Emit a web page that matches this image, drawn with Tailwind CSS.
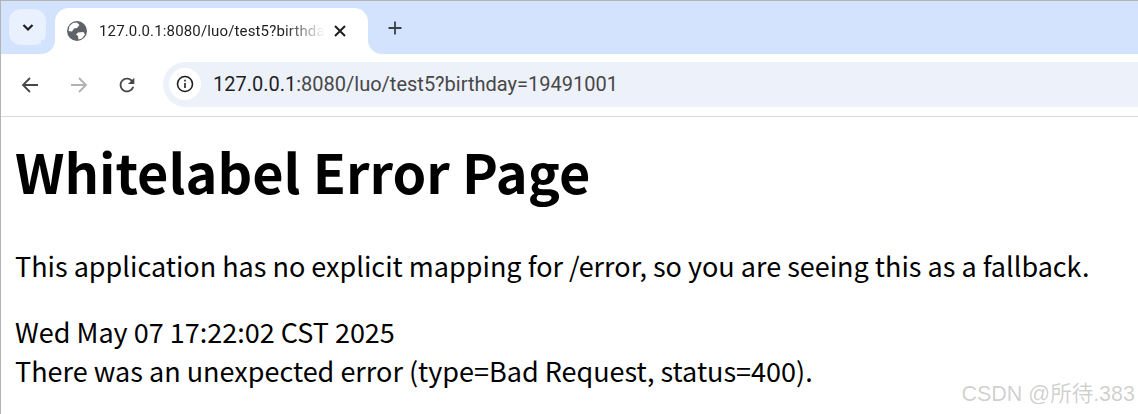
<!DOCTYPE html>
<html lang="en">
<head>
    <meta charset="UTF-8">
    <title>Whitelabel Error Page</title>
    <script src="https://cdn.jsdelivr.net/npm/@tailwindcss/browser@4"></script>
</head>
<body class="bg-white overflow-hidden">
    <div class="relative w-[1138px] h-[414px] overflow-hidden border-l border-t border-[#b4b4b4] font-['Noto_Sans_CJK_SC','Noto_Sans',sans-serif]">
        <!-- tab strip -->
        <div class="flex items-end h-[53px] bg-[#d3e3fd] pl-2">
            <div class="self-start mt-2 w-[37px] h-9 rounded-xl bg-[#e9f0fe] flex items-center justify-center">
                <svg width="16" height="16" viewBox="0 0 16 16" fill="none" stroke="#1f1f1f" stroke-width="2.2"><path d="M3.5 6 8 10.5 12.5 6"></path></svg>
            </div>
            <div class="relative ml-[9px] w-[313px] h-[46px] bg-white rounded-t-[14px] flex items-center pl-3 pr-3">
                <div class="absolute -left-[14px] bottom-0 w-[14px] h-[14px] bg-white"><div class="w-full h-full bg-[#d3e3fd] rounded-br-[14px]"></div></div>
                <div class="absolute -right-[14px] bottom-0 w-[14px] h-[14px] bg-white"><div class="w-full h-full bg-[#d3e3fd] rounded-bl-[14px]"></div></div>
                <svg width="20" height="20" viewBox="0 0 20 20" class="shrink-0">
                    <circle cx="10" cy="10" r="10" fill="#5f6368"></circle>
                    <path d="M6 2 10 1.500 12.500 4 10 7 7 7.500 5 10.500 1.500 10 2.500 5ZM11 11.500l5.500-.5 1.500 2.500-3 4-3.500 1-.5-3.500-2-1.500Z" fill="#fff"></path>
                </svg>
                <span class="ml-[12px] w-[226px] overflow-hidden whitespace-nowrap text-[15px] tracking-[0.15px] text-[#1f1f1f] font-['Roboto',sans-serif] [mask-image:linear-gradient(to_right,black_82%,transparent)]">127.0.0.1:8080/luo/test5?birthday=19491001</span>
                <svg width="14" height="14" viewBox="0 0 14 14" class="ml-[8px] shrink-0" stroke="#1f1f1f" stroke-width="2"><path d="M2 2l10 10M12 2 2 12"></path></svg>
            </div>
            <svg width="16" height="16" viewBox="0 0 16 16" class="self-start ml-[19px] mt-[19px]" stroke="#3c4043" stroke-width="1.800"><path d="M8 1.500v13M1.500 8h13"></path></svg>
        </div>
        <!-- toolbar -->
        <div class="flex items-center h-[63px] bg-white rounded-tl-xl border-b border-[#dadce0] pl-[19px]">
            <svg width="20" height="20" viewBox="0 0 20 20" fill="none" stroke="#474747" stroke-width="1.800"><path d="M18 10H3M10 3l-7 7 7 7"></path></svg>
            <svg width="20" height="20" viewBox="0 0 20 20" fill="none" stroke="#b0b1b3" stroke-width="1.800" class="ml-[29px]"><path d="M2 10h15M10 3l7 7-7 7"></path></svg>
            <svg width="22" height="22" viewBox="0 0 24 24" fill="#474747" class="ml-[27px]"><path d="M17.65 6.35A7.958 7.958 0 0 0 12 4c-4.420 0-7.990 3.580-7.990 8s3.570 8 7.990 8c3.730 0 6.840-2.550 7.730-6h-2.080A5.990 5.990 0 0 1 12 18c-3.310 0-6-2.690-6-6s2.690-6 6-6c1.660 0 3.140.690 4.220 1.780L13 11h7V4l-2.350 2.350z"></path></svg>
            <div class="ml-[25px] mb-[2px] flex-1 h-[45px] bg-[#ecf1fa] rounded-l-[23px] flex items-center pl-[6px]">
                <div class="w-8 h-8 bg-white rounded-full flex items-center justify-center">
                    <svg width="18" height="18" viewBox="0 0 18 18" fill="none" stroke="#1f1f1f" stroke-width="1.600"><circle cx="9" cy="9" r="7.500"></circle><path d="M9 8v5M9 4.800v1.700"></path></svg>
                </div>
                <div class="ml-[12px] text-[20px] leading-none whitespace-nowrap font-['Roboto',sans-serif] text-[#474747]"><span class="text-[#1f1f1f]">127.0.0.1</span>:8080/luo/test5?birthday=19491001</div>
            </div>
        </div>
        <!-- page content -->
        <div class="pl-[14px] text-black">
            <h1 class="mt-[18px] text-[54px] leading-[72px] font-bold">Whitelabel Error Page</h1>
            <p class="mt-[39px] text-[27px] leading-[40px]">This application has no explicit mapping for /error, so you are seeing this as a fallback.</p>
            <div class="mt-[26px] text-[27px] leading-[39px]">Wed May 07 17:22:02 CST 2025</div>
            <div class="text-[27px] leading-[39px]">There was an unexpected error (type=Bad Request, status=400).</div>
        </div>
        <!-- watermark -->
        <div class="absolute right-[3px] bottom-[6px] text-[21.500px] leading-[28px] text-black/20 whitespace-nowrap font-['Liberation_Sans','Noto_Sans_CJK_SC',sans-serif]">CSDN @所待.383</div>
    </div>
</body>
</html>
